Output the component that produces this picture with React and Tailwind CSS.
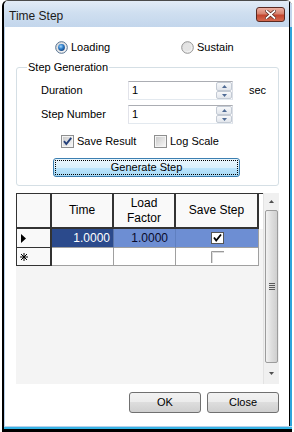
import React from "react";

function Radio({ checked, id }) {
  return (
    <svg width="13" height="13" viewBox="0 0 13 13" className="shrink-0">
      <defs>
        <linearGradient id={id + "o"} x1="0" y1="0" x2="1" y2="1">
          <stop offset="0" stopColor="#d8d8d8" />
          <stop offset="1" stopColor="#fbfbfb" />
        </linearGradient>
        <radialGradient id={id + "d"} cx="0.4" cy="0.35" r="0.7">
          <stop offset="0" stopColor="#a6d8fb" />
          <stop offset="0.5" stopColor="#2f7fcb" />
          <stop offset="1" stopColor="#14407c" />
        </radialGradient>
      </defs>
      <circle cx="6.5" cy="6.5" r="5.8" fill={`url(#${id}o)`} stroke={checked ? "#54708f" : "#939393"} strokeWidth="1" />
      {checked ? (
        <circle cx="6.5" cy="6.5" r="3.4" fill={`url(#${id}d)`} />
      ) : (
        <circle cx="6.5" cy="6.5" r="3.6" fill="#e4e4e4" />
      )}
    </svg>
  );
}

function Check({ checked }) {
  return (
    <svg width="13" height="13" viewBox="0 0 13 13" className="shrink-0">
      <defs>
        <linearGradient id="cbg" x1="0" y1="0" x2="1" y2="1">
          <stop offset="0" stopColor="#cbcbcb" />
          <stop offset="1" stopColor="#f6f6f6" />
        </linearGradient>
      </defs>
      <rect x="0.5" y="0.5" width="12" height="12" fill="#f4f4f4" stroke="#8e8f8f" />
      <rect x="2" y="2" width="9" height="9" fill="url(#cbg)" />
      {checked && (
        <path d="M3 6.2 L5.3 9 L10.2 2.8" fill="none" stroke="#24407a" strokeWidth="1.9" />
      )}
    </svg>
  );
}

function SpinInput() {
  return (
    <div className="w-[105px] h-[19px] flex border border-t-[#abadb3] border-l-[#e2e3ea] border-r-[#dbdfe6] border-b-[#e3e9ef] bg-white">
      <div className="flex-1 pl-[3px] flex items-center">1</div>
      <div className="w-[16px] flex flex-col">
        <div className="h-[9px] flex items-center justify-center border border-[#c3cad4] rounded-[2px] bg-[linear-gradient(to_bottom,#f7f8fa,#e2e6ec)]">
          <svg width="5" height="3" viewBox="0 0 5 3"><path d="M0 3 L2.5 0 L5 3Z" fill="#4f6b95" /></svg>
        </div>
        <div className="h-[8px] flex items-center justify-center border border-[#c3cad4] rounded-[2px] bg-[linear-gradient(to_bottom,#f7f8fa,#e2e6ec)]">
          <svg width="5" height="3" viewBox="0 0 5 3"><path d="M0 0 L2.5 3 L5 0Z" fill="#4f6b95" /></svg>
        </div>
      </div>
    </div>
  );
}

function GridCheck({ checked }) {
  if (checked) {
    return (
      <svg width="13" height="12" viewBox="0 0 13 12">
        <rect x="0.5" y="0.5" width="12" height="11" fill="#fff" stroke="#555" />
        <path d="M3 5.5 L5.2 8.5 L10 2.5" fill="none" stroke="#000" strokeWidth="1.8" />
      </svg>
    );
  }
  return (
    <svg width="13" height="12" viewBox="0 0 13 12">
      <rect x="0" y="0" width="13" height="12" fill="#fff" />
      <path d="M0.5 12 V0.5 H13" fill="none" stroke="#9a9a9a" />
      <path d="M1.5 12 V1.5 H13" fill="none" stroke="#dcdcdc" />
    </svg>
  );
}

export default function App() {
  return (
    <div className="w-[294px] h-[432px] bg-white font-['Liberation_Sans',Arial,sans-serif] text-[11px] leading-[13px] text-black overflow-hidden">
      <div className="ml-[2px] w-[290px] h-[432px] flex flex-col border-l-2 border-l-black border-t border-t-[#4a4a4a] rounded-t-[6px] overflow-hidden">
        {/* Title bar */}
        <div className="h-[26px] flex shrink-0">
          <div className="flex-1 flex items-start justify-between bg-[linear-gradient(to_bottom,#e2ebf6,#cfdff0_45%,#c3d6ec)] pl-[5px] pr-[4px]">
            <span className="pt-[8px] text-[12px] leading-[14px] text-[#1b1b1b]">Time Step</span>
            <div className="mt-[6px] w-[29px] h-[15px] rounded-[3px] border border-[#5a2a22] bg-[linear-gradient(to_bottom,#ecb0a2,#d7826e_45%,#c4452e_55%,#d46a50)] flex items-center justify-center">
              <svg width="11" height="9" viewBox="0 0 11 9">
                <path d="M1.5 1 L9.5 8 M9.5 1 L1.5 8" stroke="#5b2a20" strokeWidth="3.2" strokeLinecap="square" />
                <path d="M1.5 1 L9.5 8 M9.5 1 L1.5 8" stroke="#ffffff" strokeWidth="1.7" strokeLinecap="square" />
              </svg>
            </div>
          </div>
          <div className="w-[1px] bg-black" />
          <div className="w-[2px] bg-[#c3d6ec]" />
        </div>

        {/* Client row */}
        <div className="h-[399px] flex shrink-0">
          <div className="w-[1px] bg-[#b9d1ea]" />
          <div className="w-[284px] bg-white flex flex-col pl-[11px] pr-[10px]">
            {/* Radio row */}
            <div className="mt-[14px] h-[13px] flex items-center">
              <div className="ml-[39px] w-[126px] flex items-center">
                <Radio checked id="r1" />
                <span className="ml-[3px]">Loading</span>
              </div>
              <div className="flex items-center">
                <Radio id="r2" />
                <span className="ml-[3px]">Sustain</span>
              </div>
            </div>

            {/* Group box */}
            <div className="mt-[13px] h-[119px] relative border border-[#d5dfe5] rounded-[3px] flex flex-col pl-[24px] pt-[13px]">
              <span className="absolute left-[10px] top-[-8px] px-[1px] bg-white leading-[14px]">Step Generation</span>
              <div className="h-[19px] flex items-center">
                <span className="w-[87px]">Duration</span>
                <SpinInput />
                <span className="ml-[16px]">sec</span>
              </div>
              <div className="mt-[5px] h-[19px] flex items-center">
                <span className="w-[87px]">Step Number</span>
                <SpinInput />
              </div>
              <div className="mt-[11px] h-[13px] flex items-center ml-[20px]">
                <div className="w-[93px] flex items-center">
                  <Check checked />
                  <span className="ml-[3px]">Save Result</span>
                </div>
                <div className="flex items-center">
                  <Check />
                  <span className="ml-[3px]">Log Scale</span>
                </div>
              </div>
              <div className="mt-[10px] ml-[12px] w-[187px] h-[19px] rounded-[3px] border border-[#3c7fb1] bg-[linear-gradient(to_bottom,#eaf6fd_0%,#d9f0fc_50%,#bee6fd_50%,#a7d9f5_100%)] outline-1 outline-dotted outline-black outline-offset-[-3px] flex items-center justify-center">
                Generate Step
              </div>
            </div>

            {/* Grid */}
            <div className="mt-[7px] h-[191px] flex text-[12px] leading-[15px]">
              <div className="w-[247px] bg-[#f4f4f4] flex flex-col">
                {/* header */}
                <div className="h-[36px] flex border-t border-t-[#333]">
                  <div className="w-[36px] bg-[#f9f9f9] border-l border-l-[#333] border-r-2 border-r-[#333] border-b-2 border-b-[#333]" />
                  <div className="w-[62px] bg-[#f9f9f9] border-r-2 border-r-[#333] border-b-2 border-b-[#333] flex items-center justify-center">Time</div>
                  <div className="w-[62px] bg-[#f9f9f9] border-r-2 border-r-[#333] border-b-2 border-b-[#333] flex flex-col items-center justify-center text-center">
                    <span>Load</span>
                    <span>Factor</span>
                  </div>
                  <div className="w-[83px] bg-[#f9f9f9] border-r-2 border-r-[#333] border-b-2 border-b-[#333] flex items-center justify-center">Save Step</div>
                  <div className="flex-1 bg-white" />
                </div>
                {/* row 1 */}
                <div className="h-[19px] flex">
                  <div className="w-[36px] bg-[#f9f9f9] border-l border-l-[#333] border-r-2 border-r-[#333] border-b border-b-[#333] flex items-center pl-[4px]">
                    <svg width="5" height="9" viewBox="0 0 5 9"><path d="M0 0 L5 4.5 L0 9Z" fill="#000" /></svg>
                  </div>
                  <div className="w-[62px] bg-[#2b4a8c] text-white border-r border-r-[#5a74a8] border-b border-b-[#a0a0a0] flex items-center justify-end pr-[3px]">1.0000</div>
                  <div className="w-[62px] bg-[#6d8ed3] text-[#0a0a2a] border-r border-r-[#5f7fc0] border-b border-b-[#a0a0a0] flex items-center justify-end pr-[7px]">1.0000</div>
                  <div className="w-[83px] bg-[#6d8ed3] border-r border-r-[#a0a0a0] border-b border-b-[#a0a0a0] flex items-center justify-center">
                    <GridCheck checked />
                  </div>
                </div>
                {/* row 2 */}
                <div className="h-[18px] flex">
                  <div className="w-[36px] bg-[#f9f9f9] border-l border-l-[#333] border-r-2 border-r-[#333] border-b border-b-[#333] flex items-center pl-[3px]">
                    <svg width="8" height="8" viewBox="0 0 8 8">
                      <path d="M4 0 V8 M0 4 H8 M1 1 L7 7 M7 1 L1 7" stroke="#000" strokeWidth="1" />
                    </svg>
                  </div>
                  <div className="w-[62px] bg-white border-r border-r-[#a0a0a0] border-b border-b-[#a0a0a0]" />
                  <div className="w-[62px] bg-white border-r border-r-[#a0a0a0] border-b border-b-[#a0a0a0]" />
                  <div className="w-[83px] bg-white border-r border-r-[#a0a0a0] border-b border-b-[#a0a0a0] flex items-center justify-center">
                    <GridCheck />
                  </div>
                </div>
              </div>
              {/* scrollbar */}
              <div className="w-[16px] bg-[#f0f0f0] border-l border-l-[#e3e3e3] flex flex-col">
                <div className="h-[17px] flex items-center justify-center">
                  <svg width="5" height="3" viewBox="0 0 5 3"><path d="M0 3 L2.5 0 L5 3Z" fill="#505050" /></svg>
                </div>
                <div className="h-[153px] mx-[1px] rounded-[2px] border border-[#9c9c9c] bg-[linear-gradient(to_right,#f2f2f2,#dedede_50%,#cfcfcf)] flex items-center justify-center">
                  <svg width="6" height="7" viewBox="0 0 6 7">
                    <path d="M0 0.5 H6 M0 2.5 H6 M0 4.5 H6 M0 6.5 H6" stroke="#5a5a5a" strokeWidth="1" />
                  </svg>
                </div>
                <div className="flex-1 flex items-center justify-center">
                  <svg width="5" height="3" viewBox="0 0 5 3"><path d="M0 0 L2.5 3 L5 0Z" fill="#505050" /></svg>
                </div>
              </div>
            </div>

            {/* Buttons */}
            <div className="mt-[8px] flex justify-end gap-[6px]">
              <div className="w-[72px] h-[21px] rounded-[3px] border border-[#707070] bg-[linear-gradient(to_bottom,#f2f2f2_0%,#ebebeb_50%,#dddddd_50%,#cfcfcf_100%)] flex items-center justify-center">OK</div>
              <div className="w-[72px] h-[21px] rounded-[3px] border border-[#707070] bg-[linear-gradient(to_bottom,#f2f2f2_0%,#ebebeb_50%,#dddddd_50%,#cfcfcf_100%)] flex items-center justify-center">Close</div>
            </div>
          </div>
          <div className="w-[1px] bg-black" />
          <div className="w-[2px] bg-[#2fa4dc]" />
        </div>

        {/* Bottom frame */}
        <div className="h-[1px] bg-[#b9d1ea] shrink-0" />
        <div className="h-[2px] bg-[#35b3e5] shrink-0" />
        <div className="h-[3px] bg-black shrink-0" />
      </div>
    </div>
  );
}
